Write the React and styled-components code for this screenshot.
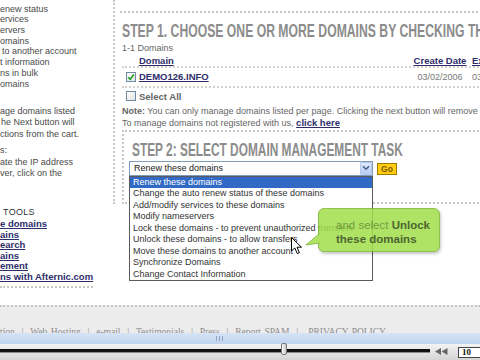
import React from 'react'
import styled, { createGlobalStyle } from 'styled-components'

const GlobalStyle = createGlobalStyle`
  html, body { margin: 0; padding: 0; background: #ffffff; }
  body { font-family: "Liberation Sans", Arial, sans-serif; }
`;

const Page = styled.div`
  position: relative;
  width: 480px;
  height: 360px;
  overflow: hidden;
  background: #ffffff;
  font-size: 9px;
  color: #5c5c5c;
  display: flex;
  flex-direction: column;
`;

const Content = styled.div`
  display: flex;
  height: 305px;
  flex-shrink: 0;
`;

const Sidebar = styled.div`
  width: 115px;
  flex-shrink: 0;
  overflow: hidden;
  color: #4a4a4a;
`;

const SideBox = styled.div`
  height: 204px;
  box-sizing: border-box;
  border-right: 2px dotted #c8c8c8;
  padding-top: 3.6px;
`;

const SideGroup = styled.div`
  margin-top: ${(p) => p.$gap || 0}px;
  line-height: ${(p) => p.$lh}px;
`;

const SideLine = styled.div`
  white-space: nowrap;
  padding-left: ${(p) => p.$indent || 0}px;
`;

const ToolsTitle = styled.div`
  margin-top: 2.7px;
  padding-left: 3px;
  line-height: 10.6px;
  color: #333;
  letter-spacing: 0.3px;
`;

const ToolLinks = styled.div`
  width: 93px;
  margin-top: 2px;
  padding-bottom: 4px;
  border-bottom: 2px dotted #c8c8c8;
  line-height: 10.5px;
`;

const Link = styled.a`
  color: #2e2e6a;
  font-size: 9.5px;
  font-weight: bold;
  text-decoration: underline;
  white-space: nowrap;
`;

const Main = styled.div`
  flex: 1;
  min-width: 0;
  padding-left: 5px;
`;

const Step = styled.section`
  width: 420px;
  margin-top: 11px;
  border-top: 2px dotted #c8c8c8;
  padding-left: 2px;
`;

const Heading = styled.h2`
  margin: ${(p) => p.$mt}px 0 0 ${(p) => p.$ml || 0}px;
  font-size: 19px;
  line-height: 19px;
  font-weight: bold;
  color: #8c8c8c;
  white-space: nowrap;
  transform: scaleX(${(p) => p.$sx || 0.625});
  transform-origin: 0 50%;
`;

const Count = styled.div`
  margin-top: 3px;
  line-height: 11px;
  color: #666;
`;

const Row = styled.div`
  display: grid;
  grid-template-columns: 17px 271px 60px 60px;
  align-items: center;
  height: ${(p) => p.$h}px;
  margin-top: ${(p) => p.$mt || 0}px;
  border-bottom: ${(p) => (p.$line ? '2px dotted #d2d2d2' : 'none')};
  white-space: nowrap;
`;

const Cell = styled.div`
  padding-left: ${(p) => p.$pad || 0}px;
  color: #777;
  display: flex;
  align-items: center;
  justify-content: ${(p) => (p.$center ? 'center' : 'flex-start')};
`;

const Box = styled.span`
  display: inline-block;
  width: 8px;
  height: 8px;
  border: 1px solid #6f8aa3;
  background: linear-gradient(135deg, #ffffff, #e2e2e2);
  position: relative;
`;

const Check = styled.svg`
  position: absolute;
  left: 0;
  top: 0;
`;

const SelectAll = styled.span`
  font-weight: bold;
  color: #666;
  font-size: 9.5px;
`;

const Note = styled.p`
  margin: 3px 0 0;
  line-height: 12.5px;
  color: #666;
  white-space: nowrap;
  b { color: #666; }
`;

const TaskBox = styled.div`
  border-top: 2px dotted #c8c8c8;
  border-left: 2px dotted #c8c8c8;
  border-bottom: 2px dotted #c8c8c8;
  padding: 0 0 26px 5px;
`;

const SelectRow = styled.div`
  display: flex;
  align-items: flex-start;
  margin-top: 1.5px;
`;

const Select = styled.div`
  position: relative;
  width: 244px;
  height: 15px;
  box-sizing: border-box;
  border: 1px solid #7f9db9;
  background: #fff;
  display: flex;
  align-items: center;
  justify-content: space-between;
  color: #222;
  padding-left: 4px;
`;

const Arrow = styled.span`
  width: 12px;
  height: 13px;
  box-sizing: border-box;
  border: 1px solid #b6c9ef;
  border-radius: 1px;
  background: linear-gradient(#dde8fb, #b7cdf4);
  display: flex;
  align-items: center;
  justify-content: center;
`;

const Options = styled.ul`
  position: absolute;
  top: 14px;
  left: -1px;
  width: 244px;
  box-sizing: border-box;
  margin: 0;
  padding: 0;
  list-style: none;
  border: 1px solid #5a5a5a;
  background: #fff;
  z-index: 2;
`;

const Option = styled.li`
  line-height: 11.5px;
  padding-left: 3px;
  white-space: nowrap;
  color: ${(p) => (p.$active ? '#fff' : '#333')};
  background: ${(p) => (p.$active ? '#316ac5' : 'transparent')};
`;

const GoButton = styled.button`
  margin: 2px 0 0 4px;
  width: 20px;
  height: 12px;
  padding: 0;
  border: 1px solid #a37a00;
  background: #ffcc11;
  color: #7d5a00;
  font-family: "Liberation Sans", Arial, sans-serif;
  font-size: 8.5px;
  font-weight: bold;
  line-height: 10px;
`;

const Callout = styled.div`
  position: absolute;
  left: 318px;
  top: 208px;
  width: 122px;
  height: 44px;
  box-sizing: border-box;
  border-radius: 6px;
  background: #a3df4c;
  border: 1px solid #7db532;
  box-shadow: 1px 2px 3px rgba(0, 0, 0, 0.25);
  opacity: 0.86;
  padding: 8.75px 0 0 17px;
  font-size: 11.5px;
  line-height: 14.5px;
  color: #5d8c24;
  white-space: nowrap;
  z-index: 3;
  b { color: #2f4d0f; }
`;

const Tail = styled.svg`
  position: absolute;
  left: -15px;
  top: 22px;
`;

const Cursor = styled.svg`
  position: absolute;
  left: 291px;
  top: 237px;
  z-index: 4;
`;

const FooterBand = styled.div`
  height: 28px;
  flex-shrink: 0;
  box-sizing: border-box;
  border-top: 2px dotted #c8c8c8;
  background: #ececec;
  overflow: hidden;
  padding-top: 20px;
  font-family: "Liberation Serif", "Times New Roman", serif;
  font-size: 9.5px;
  line-height: 11px;
  color: #8c8c8c;
  white-space: nowrap;
  word-spacing: 1px;
`;

const PlayerBand = styled.div`
  height: 11px;
  flex-shrink: 0;
  background: linear-gradient(#d6e4f6, #bfd4ef);
  display: flex;
  align-items: center;
  padding-left: 216px;
`;

const Grip = styled.span`
  width: 5px;
  height: 5px;
  border-left: 1px solid #8ea3bd;
  border-right: 1px solid #8ea3bd;
  background: linear-gradient(90deg, transparent 40%, #8ea3bd 40%, #8ea3bd 60%, transparent 60%);
`;

const Controls = styled.div`
  flex: 1;
  display: flex;
  align-items: center;
  background: linear-gradient(#f3f3f3, #d4d4d4);
  & > * { flex-shrink: 0; }
`;

const Track = styled.div`
  position: relative;
  width: 430px;
  height: 3px;
  background: #111;
  border-bottom: 1px solid #8a8a8a;
  margin-top: -2px;
`;

const Thumb = styled.span`
  position: absolute;
  top: -6px;
  width: 6px;
  height: 12px;
  margin-left: -3px;
  box-sizing: border-box;
  border: 1px solid #777;
  border-radius: 2px;
  background: linear-gradient(90deg, #fafafa, #c9c9c9);
`;

const Rewind = styled.svg`
  margin: -2px 0 0 5px;
`;

const TimeBox = styled.div`
  margin: 0 0 0 10px;
  width: 30px;
  height: 11px;
  box-sizing: border-box;
  border: 1px solid #444;
  background: #fff;
  font-family: "Liberation Serif", "Times New Roman", serif;
  font-size: 9px;
  font-weight: bold;
  line-height: 9px;
  padding-left: 3px;
  color: #111;
`;

const sideTop = [
  ['enew status'],
  ['ervices'],
  ['ervers'],
  ['omains'],
  ['to another account', 2],
  ['t information'],
  ['ns in bulk'],
  ['omains'],
];

const tools = ['e domains', 'ains', 'earch', 'ains', 'ement', 'ns with Afternic.com'];

const tasks = [
  'Renew these domains',
  'Change the auto renew status of these domains',
  'Add/modify services to these domains',
  'Modify nameservers',
  'Lock these domains - to prevent unauthorized transfers',
  'Unlock these domains - to allow transfers',
  'Move these domains to another account',
  'Synchronize Domains',
  'Change Contact Information',
];

const CheckBox = ({ checked }) => (
  <Box>
    {checked && (
      <Check width="8" height="8" viewBox="0 0 8 8">
        <path d="M1.2 4.2 L3.2 6.2 L6.8 1.6" fill="none" stroke="#1d9a1d" strokeWidth="1.6" />
      </Check>
    )}
  </Box>
);

const progress = 66;

export default function App() {
  return (
    <Page>
      <GlobalStyle />
      <Content>
        <Sidebar>
          <SideBox>
            <SideGroup $lh={10.7}>
              {sideTop.map(([t, i], n) => (
                <SideLine key={n} $indent={i}>{t}</SideLine>
              ))}
            </SideGroup>
            <SideGroup $lh={11.5} $gap={16.5}>
              <SideLine>age domains listed</SideLine>
              <SideLine $indent={1}>he Next button will</SideLine>
              <SideLine>ctions from the cart.</SideLine>
            </SideGroup>
            <SideGroup $lh={10.5} $gap={4.5}>
              <SideLine>s:</SideLine>
            </SideGroup>
            <SideGroup $lh={10.5} $gap={2}>
              <SideLine>ate the IP address</SideLine>
              <SideLine>ver, click on the</SideLine>
            </SideGroup>
          </SideBox>
          <ToolsTitle>TOOLS</ToolsTitle>
          <ToolLinks>
            {tools.map((t, n) => (
              <SideLine key={n}><Link>{t}</Link></SideLine>
            ))}
          </ToolLinks>
        </Sidebar>

        <Main>
          <Step>
            <Heading $mt={7.5} $sx={0.642}>STEP 1. CHOOSE ONE OR MORE DOMAINS BY CHECKING THE BOXES BELOW</Heading>
            <Count>1-1 Domains</Count>
            <Row $h={11} $mt={1} $line>
              <Cell />
              <Cell><Link>Domain</Link></Cell>
              <Cell $center><Link>Create Date</Link></Cell>
              <Cell $pad={2}><Link>Expiration Date</Link></Cell>
            </Row>
            <Row $h={18} $line>
              <Cell $pad={4}><CheckBox checked /></Cell>
              <Cell><Link>DEMO126.INFO</Link></Cell>
              <Cell $center>03/02/2006</Cell>
              <Cell $pad={2}>03/02/2007</Cell>
            </Row>
            <Row $h={11} $mt={3}>
              <Cell $pad={4}><CheckBox /></Cell>
              <Cell><SelectAll>Select All</SelectAll></Cell>
            </Row>
            <Note>
              <b>Note:</b> You can only manage domains listed per page. Clicking the next button will remove previous selections.
              <br />
              To manage domains not registered with us, <Link>click here</Link>
            </Note>

            <TaskBox>
              <Heading $mt={8.5} $ml={3}>STEP 2: SELECT DOMAIN MANAGEMENT TASK</Heading>
              <SelectRow>
                <Select>
                  <span>Renew these domains</span>
                  <Arrow>
                    <svg width="8" height="6" viewBox="0 0 8 6">
                      <path d="M1 1.2 L4 4.2 L7 1.2" fill="none" stroke="#4a5f86" strokeWidth="1.6" />
                    </svg>
                  </Arrow>
                  <Options>
                    {tasks.map((t, n) => (
                      <Option key={n} $active={n === 0}>{t}</Option>
                    ))}
                  </Options>
                </Select>
                <GoButton>Go</GoButton>
              </SelectRow>
            </TaskBox>
          </Step>
        </Main>
      </Content>

      <FooterBand>
        tion&nbsp; | &nbsp;Web Hosting&nbsp; | &nbsp;e-mail&nbsp; | &nbsp;Testimonials&nbsp; | &nbsp;Press&nbsp; | &nbsp;Report SPAM&nbsp; | &nbsp;&nbsp;PRIVACY POLICY
      </FooterBand>
      <PlayerBand>
        <Grip />
      </PlayerBand>
      <Controls>
        <Track>
          <Thumb style={{ left: `${progress}%` }} />
        </Track>
        <Rewind width="13" height="7" viewBox="0 0 13 7">
          <path d="M6 0 L0 3.5 L6 7 Z M12.5 0 L6.5 3.5 L12.5 7 Z" fill="#666" />
        </Rewind>
        <TimeBox>10</TimeBox>
      </Controls>

      <Callout>
        <Tail width="17" height="16" viewBox="0 0 17 16">
          <polygon points="16,2 2,14 16,12" fill="#a3df4c" />
          <polyline points="16,2 2,14 16,12" fill="none" stroke="#7db532" strokeWidth="1" />
        </Tail>
        and select <b>Unlock</b>
        <br />
        <b>these domains</b>
      </Callout>

      <Cursor width="12" height="19" viewBox="0 0 12 19">
        <path d="M0.5 0.5 L0.5 14 L3.8 11 L6.3 16.6 L8.4 15.7 L6 10.2 L10.5 10.2 Z" fill="#fff" stroke="#000" strokeWidth="1" />
      </Cursor>
    </Page>
  );
}
